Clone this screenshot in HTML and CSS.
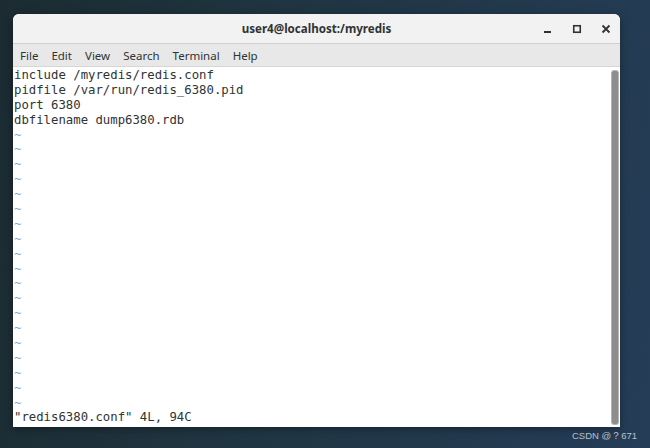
FILE: index.html
```html
<!DOCTYPE html>
<html>
<head>
<meta charset="utf-8">
<link rel="stylesheet" href="styles.css">
</head>
<body>
<div class="desktop">
  <div class="window">
    <div class="titlebar">
      <div></div>
      <div class="title">user4@localhost:/myredis</div>
      <div class="controls">
        <svg class="ctl" width="12" height="12" viewBox="0 0 12 12"><rect x="2" y="8" width="7" height="2" fill="#2e3436"/></svg>
        <svg class="ctl" width="12" height="12" viewBox="0 0 12 12"><rect x="2.75" y="2.75" width="6.5" height="6.5" fill="none" stroke="#2e3436" stroke-width="1.6"/></svg>
        <svg class="ctl" width="12" height="12" viewBox="0 0 12 12"><path d="M2.5 2.5 L9.5 9.5 M9.5 2.5 L2.5 9.5" stroke="#2e3436" stroke-width="1.8"/></svg>
      </div>
    </div>
    <div class="menubar">
      <span>File</span><span>Edit</span><span>View</span><span>Search</span><span>Terminal</span><span>Help</span>
    </div>
    <div class="term">
      <div class="text">
        <div class="line">include /myredis/redis.conf</div>
        <div class="line">pidfile /var/run/redis_6380.pid</div>
        <div class="line">port 6380</div>
        <div class="line">dbfilename dump6380.rdb</div>
        <div class="line tilde">~</div>
        <div class="line tilde">~</div>
        <div class="line tilde">~</div>
        <div class="line tilde">~</div>
        <div class="line tilde">~</div>
        <div class="line tilde">~</div>
        <div class="line tilde">~</div>
        <div class="line tilde">~</div>
        <div class="line tilde">~</div>
        <div class="line tilde">~</div>
        <div class="line tilde">~</div>
        <div class="line tilde">~</div>
        <div class="line tilde">~</div>
        <div class="line tilde">~</div>
        <div class="line tilde">~</div>
        <div class="line tilde">~</div>
        <div class="line tilde">~</div>
        <div class="line tilde">~</div>
        <div class="line tilde">~</div>
        <div class="line">"redis6380.conf" 4L, 94C</div>
      </div>
      <div class="scroll"><div class="thumb"></div></div>
    </div>
  </div>
  <div class="watermark">CSDN @？671</div>
</div>
</body>
</html>
```

FILE: styles.css
```css
html, body {
  margin: 0;
  padding: 0;
}
.desktop {
  position: relative;
  width: 650px;
  height: 448px;
  box-sizing: border-box;
  padding: 14px 0 0 13px;
  background: linear-gradient(100deg, #1b2b31 0%, #1f343f 35%, #22394c 70%, #253d57 100%);
  overflow: hidden;
}
.window {
  width: 607px;
  height: 413px;
  display: flex;
  flex-direction: column;
  border-radius: 6px 6px 0 0;
  overflow: hidden;
  background: #fff;
  box-shadow: 0 2px 8px rgba(0,0,0,0.35);
}
.titlebar {
  height: 29px;
  flex: none;
  display: grid;
  grid-template-columns: 1fr auto 1fr;
  align-items: center;
  background: #f2f2f2;
  border-bottom: 1px solid #cfcfcf;
}
.title {
  font-family: "Noto Sans", "DejaVu Sans", sans-serif;
  font-weight: 700;
  font-size: 11.6px;
  color: #2e3436;
}
.controls {
  display: flex;
  justify-content: flex-end;
  gap: 17px;
  padding-right: 8px;
}
.ctl {
  display: block;
}
.menubar {
  height: 23px;
  flex: none;
  display: flex;
  align-items: center;
  gap: 13px;
  padding-left: 7px;
  background: #e8e8e8;
  border-bottom: 1px solid #d6d6d6;
  box-sizing: border-box;
  font-family: "Noto Sans", "DejaVu Sans", sans-serif;
  font-size: 11.5px;
  color: #2e3436;
}
.term {
  flex: 1;
  display: flex;
  min-height: 0;
}
.text {
  flex: 1;
  padding: 1px 0 0 1px;
  font-family: "DejaVu Sans Mono", monospace;
  font-size: 12.3px;
  line-height: 15px;
  color: #2e3436;
}
.line {
  height: 14.9px;
  white-space: pre;
}
.tilde {
  color: #7ea6d2;
}
.scroll {
  width: 9px;
  flex: none;
  padding: 3px 1px 2px 0;
  box-sizing: border-box;
  display: flex;
}
.thumb {
  flex: 1;
  background: #8d8d8d;
  border: 1px solid #b4b4b4;
  border-radius: 3px;
}
.watermark {
  position: absolute;
  right: 13px;
  bottom: 5px;
  font-family: "Liberation Sans", sans-serif;
  font-size: 9.5px;
  color: #b9c2cc;
}
```
